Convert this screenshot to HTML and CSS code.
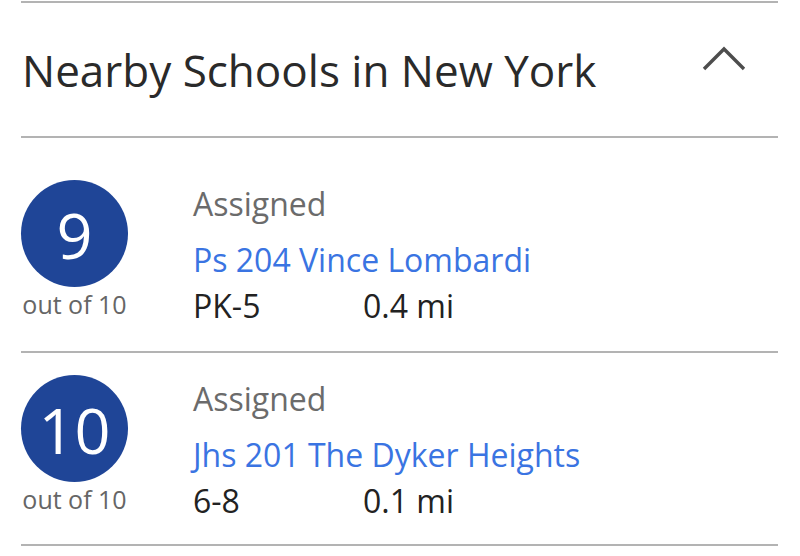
FILE: index.html
```html
<!DOCTYPE html>
<html>
<head>
<meta charset="utf-8">
<link rel="stylesheet" href="styles.css">
</head>
<body>
<div class="panel">
  <div class="header">
    <h2 class="title">Nearby Schools in New York</h2>
    <svg class="chevron" width="44" height="26" viewBox="0 0 44 26"><path d="M2 23 L22 3 L42 23" fill="none" stroke="#4d4d4d" stroke-width="3.4"/></svg>
  </div>
  <div class="list">
    <div class="row first">
      <div class="rating">
        <div class="circle">9</div>
        <div class="outof">out of 10</div>
      </div>
      <div class="info">
        <div class="label">Assigned</div>
        <a class="name">Ps 204 Vince Lombardi</a>
        <div class="meta"><span class="grades">PK-5</span><span class="dist">0.4 mi</span></div>
      </div>
    </div>
    <div class="row">
      <div class="rating">
        <div class="circle">10</div>
        <div class="outof">out of 10</div>
      </div>
      <div class="info">
        <div class="label">Assigned</div>
        <a class="name">Jhs 201 The Dyker Heights</a>
        <div class="meta"><span class="grades">6-8</span><span class="dist">0.1 mi</span></div>
      </div>
    </div>
  </div>
</div>
</body>
</html>
```
FILE: styles.css
```css
html, body {
  margin: 0;
  padding: 0;
  background: #fff;
}
body {
  font-family: "Open Sans", "Noto Sans", sans-serif;
  color: #222;
}
.panel {
  margin: 1px 22px 0 21px;
  border-top: 2px solid #b3b3b3;
}
.header {
  display: flex;
  align-items: center;
  justify-content: space-between;
  height: 133px;
  border-bottom: 2px solid #b3b3b3;
}
.title {
  margin: 0 0 0 1px;
  font-size: 44px;
  font-weight: 400;
  color: #2a2a2a;
}
.chevron {
  align-self: flex-start;
  margin-top: 43px;
  margin-right: 32px;
}
.row {
  display: flex;
  padding: 22px 0 21px;
  border-bottom: 2px solid #b3b3b3;
}
.row.first {
  padding-top: 42px;
  padding-bottom: 23px;
}
.rating {
  width: 107px;
  display: flex;
  flex-direction: column;
  align-items: center;
}
.circle {
  width: 107px;
  height: 107px;
  border-radius: 50%;
  background: #1f4597;
  color: #fff;
  font-size: 63px;
  line-height: 109px;
  text-align: center;
}
.outof {
  margin-top: 2px;
  font-size: 25px;
  line-height: 30px;
  color: #666;
  white-space: nowrap;
}
.info {
  margin-left: 65px;
  display: flex;
  flex-direction: column;
}
.label {
  margin-top: 2px;
  font-size: 32px;
  line-height: 44px;
  color: #6b6b6b;
}
.name {
  margin-top: 12px;
  font-size: 32px;
  line-height: 44px;
  color: #3a74e2;
  text-decoration: none;
}
.meta {
  margin-top: 2px;
  font-size: 32px;
  line-height: 44px;
  color: #222;
  display: flex;
}
.grades {
  width: 170px;
}
```
